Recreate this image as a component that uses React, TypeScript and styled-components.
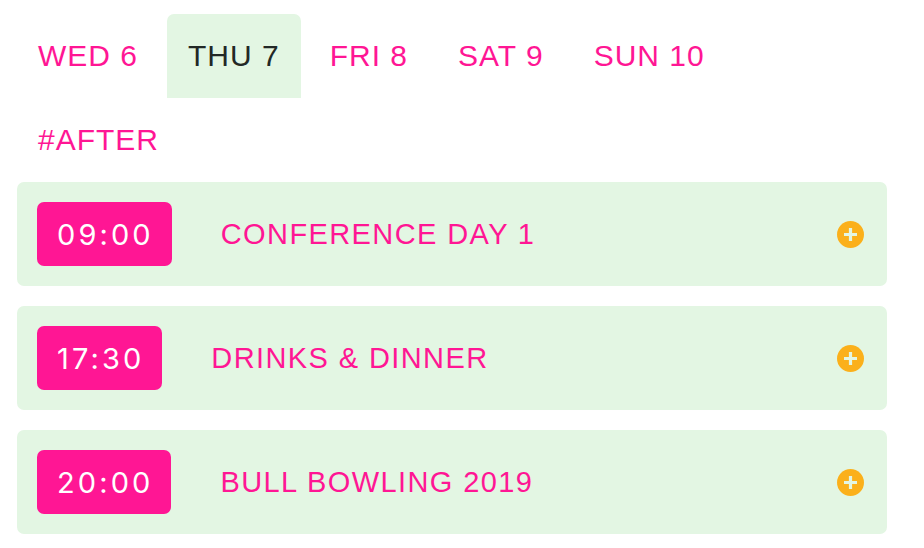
import React, { useState } from 'react';
import styled, { createGlobalStyle } from 'styled-components';

const GlobalStyle = createGlobalStyle`
  body {
    margin: 0;
    background: #ffffff;
    font-family: 'Liberation Sans', Arial, sans-serif;
  }
`;

const PINK = '#ff1694';
const GREEN = '#e3f6e3';

const Page = styled.div`
  padding: 14px 37px 0 17px;
`;

const TabBar = styled.div`
  display: flex;
  gap: 8px;
`;

const Tab = styled.button<{ $active?: boolean }>`
  height: 84px;
  padding: 0 21px;
  border: none;
  border-radius: 7px 7px 0 0;
  background: ${p => (p.$active ? GREEN : 'transparent')};
  color: ${p => (p.$active ? '#222826' : PINK)};
  font-family: inherit;
  font-size: 30px;
  font-weight: 400;
  letter-spacing: 1px;
  cursor: pointer;
`;

const Tag = styled.div`
  padding: 25px 0 0 21px;
  height: 59px;
  color: ${PINK};
  font-size: 30px;
  letter-spacing: 1px;
  line-height: 34px;
`;

const EventList = styled.div`
  display: flex;
  flex-direction: column;
  gap: 20px;
`;

const EventCard = styled.div`
  display: flex;
  align-items: center;
  height: 104px;
  padding: 0 23px 0 20px;
  background: ${GREEN};
  border-radius: 7px;
`;

const Time = styled.div`
  display: flex;
  align-items: center;
  height: 64px;
  padding: 0 18px 0 20px;
  background: ${PINK};
  color: #ffffff;
  border-radius: 7px;
  font-family: Inter, 'Liberation Sans', sans-serif;
  font-size: 29px;
  letter-spacing: 3.1px;
`;

const Title = styled.div`
  flex: 1;
  margin-left: 49px;
  color: ${PINK};
  font-size: 29px;
  letter-spacing: 1.4px;
`;

const PlusIcon = () => (
  <svg width="27" height="27" viewBox="0 0 27 27">
    <circle cx="13.5" cy="13.5" r="13.5" fill="#fbb01b" />
    <path d="M13.5 7v13M7 13.5h13" stroke="#e3f6e3" strokeWidth="3.2" />
  </svg>
);

const days = ['WED 6', 'THU 7', 'FRI 8', 'SAT 9', 'SUN 10'];

const events = [
  { time: '09:00', title: 'CONFERENCE DAY 1' },
  { time: '17:30', title: 'DRINKS & DINNER' },
  { time: '20:00', title: 'BULL BOWLING 2019' },
];

const App: React.FC = () => {
  const [active, setActive] = useState(1);

  return (
    <>
      <GlobalStyle />
      <Page>
        <TabBar>
          {days.map((d, i) => (
            <Tab key={d} $active={i === active} onClick={() => setActive(i)}>
              {d}
            </Tab>
          ))}
        </TabBar>
        <Tag>#AFTER</Tag>
        <EventList>
          {events.map(e => (
            <EventCard key={e.time}>
              <Time>{e.time}</Time>
              <Title>{e.title}</Title>
              <PlusIcon />
            </EventCard>
          ))}
        </EventList>
      </Page>
    </>
  );
};

export default App;
